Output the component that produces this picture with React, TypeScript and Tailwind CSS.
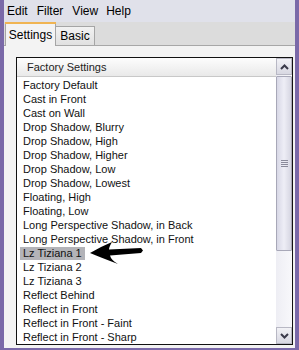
import React from "react";

const items = [
  "Factory Default",
  "Cast in Front",
  "Cast on Wall",
  "Drop Shadow, Blurry",
  "Drop Shadow, High",
  "Drop Shadow, Higher",
  "Drop Shadow, Low",
  "Drop Shadow, Lowest",
  "Floating, High",
  "Floating, Low",
  "Long Perspective Shadow, in Back",
  "Long Perspective Shadow, in Front",
  "Lz Tiziana 1",
  "Lz Tiziana 2",
  "Lz Tiziana 3",
  "Reflect Behind",
  "Reflect in Front",
  "Reflect in Front - Faint",
  "Reflect in Front - Sharp",
];

export default function App() {
  return (
    <div
      className="relative w-[299px] h-[350px] bg-[#7a69a8] pl-[4px] pr-[4px] pb-[5px] flex flex-col overflow-hidden text-black"
      style={{ fontFamily: '"Liberation Sans", Arial, sans-serif' }}
    >
      {/* menu bar */}
      <div className="h-[22px] bg-[#e0e1ea] flex items-center text-[12px] shrink-0">
        <span className="ml-[3px]">Edit</span>
        <span className="ml-[9px]">Filter</span>
        <span className="ml-[9px]">View</span>
        <span className="ml-[8px]">Help</span>
      </div>
      {/* tab strip */}
      <div className="h-[24px] bg-[#dcdcdc] flex items-end pl-[1px] shrink-0 relative">
        <div className="absolute left-0 right-0 bottom-0 h-px bg-[#a7a7a7]" />
        <div className="relative z-10 h-[24px] w-[51px] bg-[#f3f3f3] border-l border-r border-[#a5a5a5] flex flex-col">
          <div className="h-[2px] bg-[#f0b452] -mx-px" />
          <div className="flex-1 flex items-center justify-center text-[12px] pb-[1px]">Settings</div>
        </div>
        <div className="relative h-[19px] w-[39px] bg-gradient-to-b from-[#f2f2f2] to-[#e0e0e0] border-t border-r border-[#a5a5a5] flex items-center justify-center text-[12px] mb-px">
          Basic
        </div>
      </div>
      {/* panel */}
      <div className="flex-1 bg-[#f3f3f3] pt-[11px] pl-[12px] pr-[2px] pb-[3px] flex">
        <div className="flex-1 border border-[#111] bg-white flex">
          <div className="flex-1 flex flex-col overflow-hidden">
            <div className="h-[19px] shrink-0 bg-gradient-to-b from-[#fdfdfd] to-[#e9e9e9] border-b border-[#c8c8c8] flex items-center pl-[10px] text-[11px] text-[#222]">
              Factory Settings
            </div>
            <div className="pt-[1px] pl-[3px] flex flex-col text-[11px] text-[#111]">
              {items.map((t) => (
                <div key={t} className="h-[14px] flex items-center">
                  <span
                    className={
                      "px-[3px] leading-[13px] whitespace-nowrap " +
                      (t === "Lz Tiziana 1" ? "bg-[#b3b3b8]" : "")
                    }
                  >
                    {t}
                  </span>
                </div>
              ))}
            </div>
          </div>
          {/* scrollbar */}
          <div className="w-[16px] shrink-0 bg-gradient-to-r from-[#eeeef4] to-[#f8f8fb] flex flex-col">
            <div className="h-[17px] shrink-0 border border-[#b8b8c4] bg-gradient-to-b from-[#f2f2f6] to-[#d8d8e2] flex items-center justify-center">
              <svg width="9" height="6" viewBox="0 0 9 6">
                <path d="M1 5 L4.5 1.5 L8 5" fill="none" stroke="#3a3a4a" strokeWidth="2" />
              </svg>
            </div>
            <div className="mt-[1px] h-[175px] shrink-0 border border-[#a8a8b8] rounded-[1px] bg-gradient-to-r from-[#d8d8e6] via-[#eeeef6] to-[#d6d6e2] flex items-end justify-center pb-[83px]">
              <div className="flex flex-col gap-[1px]">
                <div className="w-[7px] h-px bg-[#8a8a9a]" />
                <div className="w-[7px] h-px bg-[#8a8a9a]" />
                <div className="w-[7px] h-px bg-[#8a8a9a]" />
                <div className="w-[7px] h-px bg-[#8a8a9a]" />
              </div>
            </div>
            <div className="flex-1" />
            <div className="h-[17px] shrink-0 border border-[#b8b8c4] bg-gradient-to-b from-[#f2f2f6] to-[#d8d8e2] flex items-center justify-center">
              <svg width="9" height="6" viewBox="0 0 9 6">
                <path d="M1 1 L4.5 4.5 L8 1" fill="none" stroke="#3a3a4a" strokeWidth="2" />
              </svg>
            </div>
          </div>
        </div>
      </div>
      {/* arrow annotation */}
      <svg className="absolute left-[88px] top-[240px]" width="58" height="26" viewBox="0 0 58 26">
        <path
          d="M2 13 Q12 7 24 2 Q21 7 21 9.5 L53 8 L55 10.5 L53 13 L22 15.5 Q23 20 30 24 Q14 18 2 13 Z"
          fill="#000"
        />
      </svg>
    </div>
  );
}
